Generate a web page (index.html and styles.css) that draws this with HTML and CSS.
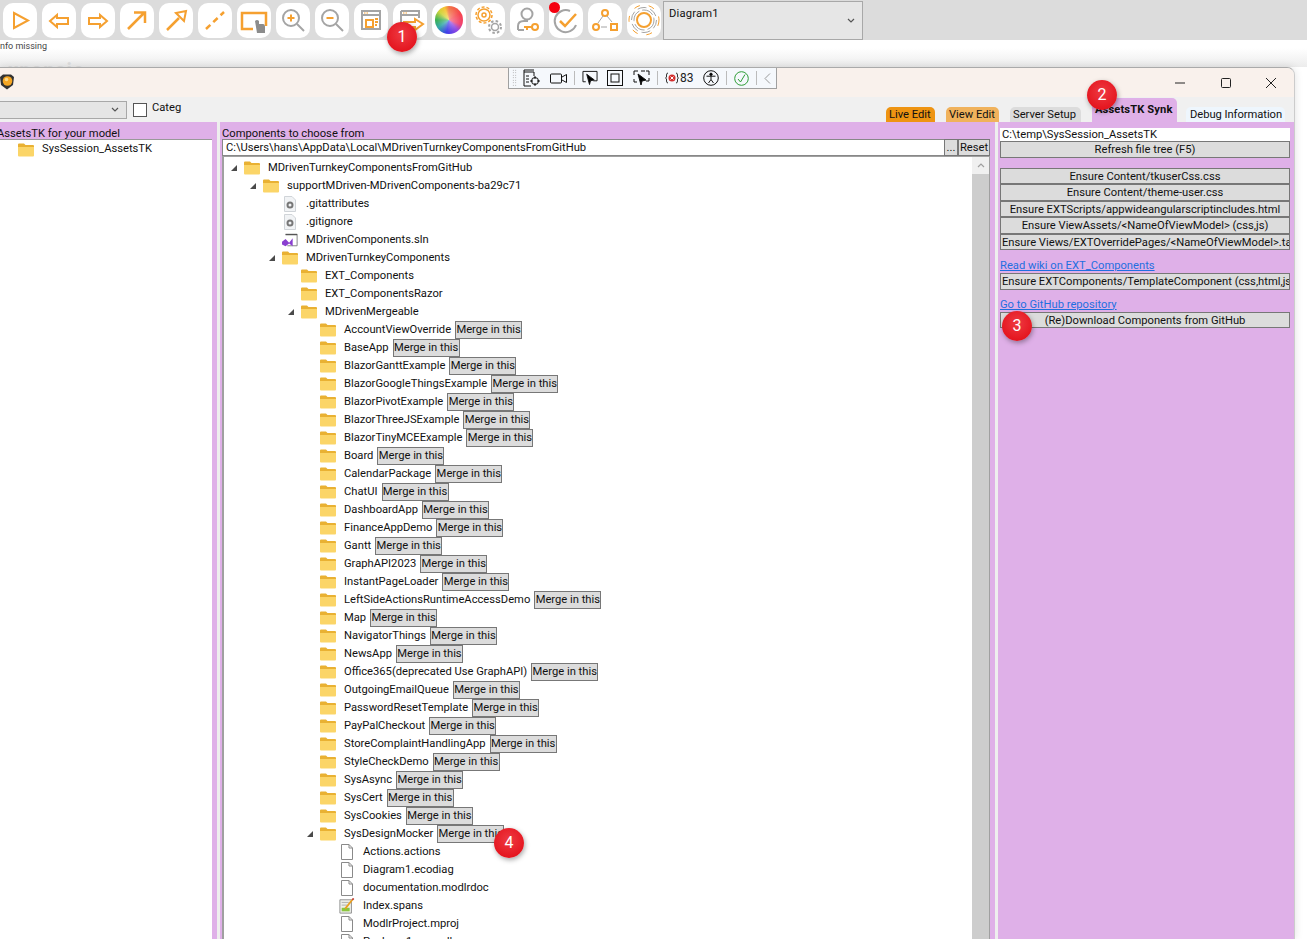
FILE: index.html
```html
<!DOCTYPE html>
<html lang="en">
<head>
<meta charset="UTF-8">
<title>AssetsTK Synk</title>
<link rel="stylesheet" href="styles.css">
</head>
<body>
<svg class="defs">
  <symbol id="folder" viewBox="0 0 16 14">
    <path d="M0 1.5 Q0 .5 1 .5 H6 L7.5 2 H15 Q16 2 16 3 V5 H0 Z" fill="#e9b133"/>
    <path d="M0 4 H16 V12.5 Q16 13.5 15 13.5 H1 Q0 13.5 0 12.5 Z" fill="#fbd568"/>
  </symbol>
  <symbol id="arrow" viewBox="0 0 8 8"><path d="M1 7 H7 V1 Z" fill="#4a4a4a"/></symbol>
  <symbol id="doc" viewBox="0 0 14 16">
    <path d="M1.5 .5 H9 L12.5 4 V15.5 H1.5 Z M9 .5 V4 H12.5" fill="#fff" stroke="#8a8a8a"/>
  </symbol>
  <symbol id="gearfile" viewBox="0 0 14 16">
    <path d="M1.5 .5 H9 L12.5 4 V15.5 H1.5 Z" fill="#f1f3f5" stroke="#d0d4d8"/>
    <circle cx="7" cy="9" r="2.5" fill="none" stroke="#777" stroke-width="2"/>
  </symbol>
  <symbol id="slnfile" viewBox="0 0 18 14">
    <path d="M4 .5 H17 V13.5 H6" fill="#fff" stroke="#777"/>
    <path d="M4 1 H17" stroke="#555" stroke-width="1.5"/>
    <path d="M0 9 L4 6 L8 10 L12 5 V14 L8 11 L4 14 L0 12 Z" fill="#8a3fd0"/>
  </symbol>
  <symbol id="notefile" viewBox="0 0 18 18">
    <path d="M1 2 H14 V17 H1 Z" fill="#eef0ea" stroke="#8a8a8a"/>
    <path d="M3 11 H12 V15 H3 Z" fill="#8cc63f"/>
    <path d="M3 5 H11 M3 8 H9" stroke="#aaa"/>
    <path d="M7 12 L15 2" stroke="#e8a020" stroke-width="2"/>
    <path d="M15 2 L16.5 .5" stroke="#c0392b" stroke-width="2"/>
  </symbol>
</svg>

<div class="toolbar">
  <span class="tool"><svg viewBox="0 0 34 34"><path d="M11 10 L25 17.5 L11 25 Z" class="o"/></svg></span>
  <span class="tool"><svg viewBox="0 0 34 34"><path d="M8 18 L15 12 V15 H26 V21 H15 V24 Z" class="o"/></svg></span>
  <span class="tool"><svg viewBox="0 0 34 34"><path d="M26 18 L19 12 V15 H8 V21 H19 V24 Z" class="o"/></svg></span>
  <span class="tool"><svg viewBox="0 0 34 34"><path d="M8 26 L24 10 M14 9.500 H25 V20" class="o thick"/></svg></span>
  <span class="tool"><svg viewBox="0 0 34 34"><path d="M8 27 L20 15" class="o thick"/><path d="M17 10 L27 8 L25 18 Z" class="o"/></svg></span>
  <span class="tool"><svg viewBox="0 0 34 34"><path d="M8 26 L26 9" class="o thick" stroke-dasharray="6 4"/></svg></span>
  <span class="tool"><svg viewBox="0 0 34 34"><path d="M16 26 H5 V10 H29 V23" class="o thick"/><path d="M18 18 Q20 16 22 18 V21 H26 Q28 21 28 24 V30 H20 Z" fill="#8c8c8c"/></svg></span>
  <span class="tool"><svg viewBox="0 0 34 34"><circle cx="15" cy="15" r="8" class="g"/><path d="M21 21 L28 28" class="g"/><path d="M11.500 15 H18.500 M15 11.500 V18.500" class="o"/></svg></span>
  <span class="tool"><svg viewBox="0 0 34 34"><circle cx="15" cy="15" r="8" class="g"/><path d="M21 21 L28 28" class="g"/><path d="M11.500 15 H18.500" class="o"/></svg></span>
  <span class="tool"><svg viewBox="0 0 34 34"><path d="M8 8 H26 V26 H8 Z M8 12 H26" class="g"/><path d="M10 10 H15" stroke="#f5a030" stroke-dasharray="1.500 1"/><path d="M12 17 H19 V24 H12 Z" class="o"/><path d="M21 16 H24 M21 19 H24 M21 22 H23" class="o"/></svg></span>
  <span class="tool"><svg viewBox="0 0 34 34"><path d="M8 8 H26 V15 M8 8 V26 H12 M8 12 H26" class="g"/><path d="M10 10 H15" stroke="#f5a030" stroke-dasharray="1.500 1"/><path d="M10 19 H22 V16 L30 21 L22 27 V24 H10" class="o"/></svg></span>
  <span class="tool"><span class="wheel"></span></span>
  <span class="tool"><svg viewBox="0 0 34 34"><circle cx="13" cy="12" r="6" class="o mid"/><circle cx="13" cy="12" r="8" class="o mid" stroke-dasharray="3 2"/><circle cx="13" cy="12" r="2" class="o mid"/><circle cx="24" cy="24" r="3.500" class="g mid"/><circle cx="24" cy="24" r="6" class="g" stroke-dasharray="2.500 2.200"/></svg></span>
  <span class="tool"><svg viewBox="0 0 34 34"><circle cx="17" cy="11" r="5.500" class="g"/><path d="M8 27 V23 Q8 18 14 18 H18" class="g"/><path d="M8 27 H14" class="g"/><circle cx="25" cy="24" r="3" class="o"/><path d="M22 24 H14 M17 24 V27" class="o"/></svg></span>
  <span class="tool"><svg viewBox="0 0 34 34"><path d="M27 22 A11 11 0 1 1 21 8" class="g"/><path d="M11 18 L16 23 L27 11" class="o thick"/></svg><span class="alert-dot"></span></span>
  <span class="tool"><svg viewBox="0 0 34 34"><circle cx="17" cy="10" r="3" class="o"/><circle cx="8" cy="24" r="3" class="o"/><path d="M23 21 H29 V27 H23 Z" class="o"/><path d="M15 13 L10 20 M19 13 L24 19 M13 24 H19" class="g thin"/></svg></span>
  <span class="tool"><svg viewBox="0 0 34 34"><circle cx="17" cy="17" r="7" class="o"/><circle cx="17" cy="17" r="10" class="g thin" stroke-dasharray="12 3"/><circle cx="17" cy="17" r="12.500" class="g thin" stroke-dasharray="9 4"/><circle cx="17" cy="17" r="15" class="o thin" stroke-dasharray="6 9"/></svg></span>
  <div class="diagram-select"><span>Diagram1</span><svg class="chev" viewBox="0 0 8 5"><path d="M1 1 L4 4 L7 1"/></svg></div>
</div>

<div class="strip">
  <div class="strip-info">nfo missing</div>
  <div class="strip-ghost">xpansio</div>
</div>

<div class="window">
  <div class="titlebar">
    <svg class="logo" viewBox="0 0 14 16"><path d="M0 3 L3 .5 H11 L14 3 L13 11 L7 15.500 L1 11 Z" fill="#333"/><circle cx="7.500" cy="7" r="4.800" fill="#f5a623"/><circle cx="6.500" cy="5.500" r="1.800" fill="#fbd98a"/></svg>
    <div class="winctl">
      <svg viewBox="0 0 12 12"><path d="M1 6 H11"/></svg>
      <svg viewBox="0 0 12 12"><rect x="1.500" y="1.500" width="9" height="9" rx="1"/></svg>
      <svg viewBox="0 0 12 12"><path d="M1 1 L11 11 M11 1 L1 11"/></svg>
    </div>
  </div>

  <div class="debugbar">
    <span class="grip"></span>
    <svg class="dbg w18" viewBox="0 0 18 18"><path d="M1 1 H11 M1 1 V17 H8 M1 3 H11 V7" /><path d="M3 7 H6 M3 10 H6 M3 13 H6"/><circle cx="12" cy="12" r="3.500"/><path d="M12 7 V10 M12 14 V17 M7 12 H10 M14 12 H17"/></svg>
    <svg class="dbg w17 gap9" viewBox="0 0 17 12"><rect x=".5" y="2" width="11" height="9" rx="1"/><path d="M12 5 L16.500 2.500 V10.500 L12 8"/></svg>
    <span class="dbg-sep"></span>
    <svg class="dbg w16" viewBox="0 0 17 16"><path d="M4 12 H1 V1 H16 V11 H12"/><path d="M5 4 L13 10 L9 11 L8 15 Z" fill="#000"/></svg>
    <svg class="dbg w16 gap9" viewBox="0 0 16 16"><rect x=".5" y=".5" width="15" height="15"/><rect x="4" y="4" width="8" height="8"/></svg>
    <svg class="dbg w17 gap10" viewBox="0 0 17 16"><path d="M4 12 H1 V9 M1 5 V1 H5 M8 1 H12 M13 1 H16 V5 M16 8 V11 H13" /><path d="M5 4 L13 10 L9 11 L8 15 Z" fill="#000"/></svg>
    <span class="dbg-sep"></span>
    <span class="errs"><svg viewBox="0 0 14 12"><path d="M3 1 Q1.500 1 1.500 3 V5 L.5 6 L1.500 7 V9 Q1.500 11 3 11 M11 1 Q12.500 1 12.500 3 V5 L13.500 6 L12.500 7 V9 Q12.500 11 11 11" fill="none" stroke="#333"/><circle cx="7" cy="6" r="3.500" fill="#d32f2f"/><path d="M5.500 4.500 L8.500 7.500 M8.500 4.500 L5.500 7.500" stroke="#fff"/></svg>83</span>
    <svg class="dbg w16 gap10" viewBox="0 0 16 16"><circle cx="8" cy="8" r="7.300"/><circle cx="8" cy="4.300" r="1.200" fill="#000"/><path d="M3.500 6.200 H12.500 M8 6.200 V9.500 M8 9.500 L5.500 13 M8 9.500 L10.500 13"/></svg>
    <span class="dbg-sep"></span>
    <svg class="dbg w15 ok" viewBox="0 0 15 15"><circle cx="7.500" cy="7.500" r="6.800"/><path d="M4 8 L6.500 11 L11 3.500"/></svg>
    <span class="dbg-sep"></span>
    <svg class="dbg w7 back" viewBox="0 0 7 11"><path d="M6 .5 L1 5.500 L6 10.500"/></svg>
  </div>

  <div class="tabrow">
    <div class="combo"><svg class="chev" viewBox="0 0 8 5"><path d="M1 1 L4 4 L7 1"/></svg></div>
    <span class="check"></span>
    <span class="categ">Categ</span>
    <div class="tabs">
      <span class="tab tab-live">Live Edit</span>
      <span class="tab tab-view">View Edit</span>
      <span class="tab tab-server">Server Setup</span>
      <span class="tab tab-assets">AssetsTK Synk</span>
      <span class="tab tab-debug">Debug Information</span>
    </div>
  </div>

  <div class="content">
    <div class="pane-left">
      <div class="pane-label clip-left">AssetsTK for your model</div>
      <div class="model-list">
        <div class="model-item"><svg class="ico-folder"><use href="#folder"/></svg>SysSession_AssetsTK</div>
      </div>
    </div>
    <div class="splitter"></div>
    <div class="pane-mid">
      <div class="pane-label">Components to choose from</div>
      <div class="path-row">
        <div class="path-input">C:\Users\hans\AppData\Local\MDrivenTurnkeyComponentsFromGitHub</div>
        <button class="btn btn-dots">...</button>
        <button class="btn btn-reset">Reset</button>
      </div>
      <div class="tree-box">
        <div class="tree">
          <div class="row l0"><svg class="tw"><use href="#arrow"/></svg><svg class="ico"><use href="#folder"/></svg><span>MDrivenTurnkeyComponentsFromGitHub</span></div>
          <div class="row l1"><svg class="tw"><use href="#arrow"/></svg><svg class="ico"><use href="#folder"/></svg><span>supportMDriven-MDrivenComponents-ba29c71</span></div>
          <div class="row l2"><i class="tw"></i><svg class="ico"><use href="#gearfile"/></svg><span>.gitattributes</span></div>
          <div class="row l2"><i class="tw"></i><svg class="ico"><use href="#gearfile"/></svg><span>.gitignore</span></div>
          <div class="row l2"><i class="tw"></i><svg class="ico"><use href="#slnfile"/></svg><span>MDrivenComponents.sln</span></div>
          <div class="row l2"><svg class="tw"><use href="#arrow"/></svg><svg class="ico"><use href="#folder"/></svg><span>MDrivenTurnkeyComponents</span></div>
          <div class="row l3"><i class="tw"></i><svg class="ico"><use href="#folder"/></svg><span>EXT_Components</span></div>
          <div class="row l3"><i class="tw"></i><svg class="ico"><use href="#folder"/></svg><span>EXT_ComponentsRazor</span></div>
          <div class="row l3"><svg class="tw"><use href="#arrow"/></svg><svg class="ico"><use href="#folder"/></svg><span>MDrivenMergeable</span></div>
          <div class="row l4"><i class="tw"></i><svg class="ico"><use href="#folder"/></svg><span>AccountViewOverride</span><button class="btn merge">Merge in this</button></div>
          <div class="row l4"><i class="tw"></i><svg class="ico"><use href="#folder"/></svg><span>BaseApp</span><button class="btn merge">Merge in this</button></div>
          <div class="row l4"><i class="tw"></i><svg class="ico"><use href="#folder"/></svg><span>BlazorGanttExample</span><button class="btn merge">Merge in this</button></div>
          <div class="row l4"><i class="tw"></i><svg class="ico"><use href="#folder"/></svg><span>BlazorGoogleThingsExample</span><button class="btn merge">Merge in this</button></div>
          <div class="row l4"><i class="tw"></i><svg class="ico"><use href="#folder"/></svg><span>BlazorPivotExample</span><button class="btn merge">Merge in this</button></div>
          <div class="row l4"><i class="tw"></i><svg class="ico"><use href="#folder"/></svg><span>BlazorThreeJSExample</span><button class="btn merge">Merge in this</button></div>
          <div class="row l4"><i class="tw"></i><svg class="ico"><use href="#folder"/></svg><span>BlazorTinyMCEExample</span><button class="btn merge">Merge in this</button></div>
          <div class="row l4"><i class="tw"></i><svg class="ico"><use href="#folder"/></svg><span>Board</span><button class="btn merge">Merge in this</button></div>
          <div class="row l4"><i class="tw"></i><svg class="ico"><use href="#folder"/></svg><span>CalendarPackage</span><button class="btn merge">Merge in this</button></div>
          <div class="row l4"><i class="tw"></i><svg class="ico"><use href="#folder"/></svg><span>ChatUI</span><button class="btn merge">Merge in this</button></div>
          <div class="row l4"><i class="tw"></i><svg class="ico"><use href="#folder"/></svg><span>DashboardApp</span><button class="btn merge">Merge in this</button></div>
          <div class="row l4"><i class="tw"></i><svg class="ico"><use href="#folder"/></svg><span>FinanceAppDemo</span><button class="btn merge">Merge in this</button></div>
          <div class="row l4"><i class="tw"></i><svg class="ico"><use href="#folder"/></svg><span>Gantt</span><button class="btn merge">Merge in this</button></div>
          <div class="row l4"><i class="tw"></i><svg class="ico"><use href="#folder"/></svg><span>GraphAPI2023</span><button class="btn merge">Merge in this</button></div>
          <div class="row l4"><i class="tw"></i><svg class="ico"><use href="#folder"/></svg><span>InstantPageLoader</span><button class="btn merge">Merge in this</button></div>
          <div class="row l4"><i class="tw"></i><svg class="ico"><use href="#folder"/></svg><span>LeftSideActionsRuntimeAccessDemo</span><button class="btn merge">Merge in this</button></div>
          <div class="row l4"><i class="tw"></i><svg class="ico"><use href="#folder"/></svg><span>Map</span><button class="btn merge">Merge in this</button></div>
          <div class="row l4"><i class="tw"></i><svg class="ico"><use href="#folder"/></svg><span>NavigatorThings</span><button class="btn merge">Merge in this</button></div>
          <div class="row l4"><i class="tw"></i><svg class="ico"><use href="#folder"/></svg><span>NewsApp</span><button class="btn merge">Merge in this</button></div>
          <div class="row l4"><i class="tw"></i><svg class="ico"><use href="#folder"/></svg><span>Office365(deprecated Use GraphAPI)</span><button class="btn merge">Merge in this</button></div>
          <div class="row l4"><i class="tw"></i><svg class="ico"><use href="#folder"/></svg><span>OutgoingEmailQueue</span><button class="btn merge">Merge in this</button></div>
          <div class="row l4"><i class="tw"></i><svg class="ico"><use href="#folder"/></svg><span>PasswordResetTemplate</span><button class="btn merge">Merge in this</button></div>
          <div class="row l4"><i class="tw"></i><svg class="ico"><use href="#folder"/></svg><span>PayPalCheckout</span><button class="btn merge">Merge in this</button></div>
          <div class="row l4"><i class="tw"></i><svg class="ico"><use href="#folder"/></svg><span>StoreComplaintHandlingApp</span><button class="btn merge">Merge in this</button></div>
          <div class="row l4"><i class="tw"></i><svg class="ico"><use href="#folder"/></svg><span>StyleCheckDemo</span><button class="btn merge">Merge in this</button></div>
          <div class="row l4"><i class="tw"></i><svg class="ico"><use href="#folder"/></svg><span>SysAsync</span><button class="btn merge">Merge in this</button></div>
          <div class="row l4"><i class="tw"></i><svg class="ico"><use href="#folder"/></svg><span>SysCert</span><button class="btn merge">Merge in this</button></div>
          <div class="row l4"><i class="tw"></i><svg class="ico"><use href="#folder"/></svg><span>SysCookies</span><button class="btn merge">Merge in this</button></div>
          <div class="row l4"><svg class="tw"><use href="#arrow"/></svg><svg class="ico"><use href="#folder"/></svg><span>SysDesignMocker</span><button class="btn merge">Merge in this</button></div>
          <div class="row l5"><i class="tw"></i><svg class="ico"><use href="#doc"/></svg><span>Actions.actions</span></div>
          <div class="row l5"><i class="tw"></i><svg class="ico"><use href="#doc"/></svg><span>Diagram1.ecodiag</span></div>
          <div class="row l5"><i class="tw"></i><svg class="ico"><use href="#doc"/></svg><span>documentation.modlrdoc</span></div>
          <div class="row l5"><i class="tw"></i><svg class="ico"><use href="#notefile"/></svg><span>Index.spans</span></div>
          <div class="row l5"><i class="tw"></i><svg class="ico"><use href="#doc"/></svg><span>ModlrProject.mproj</span></div>
          <div class="row l5"><i class="tw"></i><svg class="ico"><use href="#doc"/></svg><span>Package1.ecomdl</span></div>
        </div>
        <div class="scrollbar">
          <div class="scroll-up"><svg class="chev" viewBox="0 0 8 5"><path d="M1 4 L4 1 L7 4"/></svg></div>
          <div class="scroll-thumb"></div>
        </div>
      </div>
    </div>
    <div class="splitter"></div>
    <div class="pane-right">
      <div class="path-field">C:\temp\SysSession_AssetsTK</div>
      <button class="btn wide">Refresh file tree (F5)</button>
      <div class="group">
        <button class="btn wide">Ensure Content/tkuserCss.css</button>
        <button class="btn wide">Ensure Content/theme-user.css</button>
        <button class="btn wide">Ensure EXTScripts/appwideangularscriptincludes.html</button>
        <button class="btn wide">Ensure ViewAssets/&lt;NameOfViewModel&gt; (css,js)</button>
        <button class="btn wide clip">Ensure Views/EXTOverridePages/&lt;NameOfViewModel&gt;.tag</button>
      </div>
      <a class="link link-wiki" href="#">Read wiki on EXT_Components</a>
      <button class="btn wide clip">Ensure EXTComponents/TemplateComponent (css,html,js)</button>
      <a class="link link-git" href="#">Go to GitHub repository</a>
      <button class="btn wide">(Re)Download Components from GitHub</button>
    </div>
  </div>
</div>

<span class="marker m1">1</span>
<span class="marker m2">2</span>
<span class="marker m3">3</span>
<span class="marker m4">4</span>
</body>
</html>
```

FILE: styles.css
```css
* {
    box-sizing: border-box;
}

html, body {
    height: 100%;
}

body {
    margin: 0;
    display: flex;
    flex-direction: column;
    overflow: hidden;
    background-color: #fff;
    color: #111;
    font-family: Roboto, "Liberation Sans", sans-serif;
    font-size: 11.2px;
    line-height: 14px;
}

.defs {
    position: absolute;
    width: 0;
    height: 0;
}

/* top toolbar */
.toolbar {
    height: 40px;
    flex: none;
    display: flex;
    gap: 5px;
    padding: 3px 0 0 3px;
    background-color: #dcdcdc;
}

.tool {
    position: relative;
    width: 34px;
    height: 35px;
    flex: none;
    border-radius: 10px;
    background-color: #fff;
}

.tool svg {
    display: block;
    width: 34px;
    height: 34px;
}

.tool .o, .tool .g {
    fill: none;
    stroke-width: 2;
}

.tool .o {
    stroke: #f5a030;
}

.tool .g {
    stroke: #a4a4a4;
}

.tool .thick {
    stroke-width: 2.5;
}

.tool .mid {
    stroke-width: 1.5;
}

.tool .thin {
    stroke-width: 1;
}

.wheel {
    display: block;
    width: 28px;
    height: 28px;
    margin: 3px;
    border-radius: 50%;
    background: radial-gradient(circle, rgba(255,255,255,0.45) 0, rgba(255,255,255,0.1) 60%, rgba(255,255,255,0) 100%),
        conic-gradient(#f06a35 0deg, #f5343c 60deg, #f03060 110deg, #8a38e0 140deg, #2c28e8 190deg, #1fa0a0 235deg, #27a845 270deg, #c8d028 310deg, #f5c020 340deg, #f06a35 360deg);
}

.alert-dot {
    position: absolute;
    left: 0;
    top: -1px;
    width: 11px;
    height: 11px;
    border-radius: 50%;
    background-color: #f5000f;
}

.diagram-select {
    width: 200px;
    height: 39px;
    margin: -2px 0 0 -3px;
    padding: 5px 7px 5px 5px;
    display: flex;
    justify-content: space-between;
    border: 1px solid #a8a8a8;
    background-color: #e6e6e6;
}

.diagram-select span {
    letter-spacing: 0.2px;
}

.chev {
    width: 8px;
    height: 5px;
    fill: none;
    stroke: #555;
    stroke-width: 1.2;
}

.diagram-select .chev {
    margin-top: 11px;
}

/* strip under the toolbar */
.strip {
    height: 27px;
    flex: none;
    overflow: hidden;
    background: linear-gradient(#fff 30%, #ececec);
}

.strip-info {
    margin-top: 1px;
    font-size: 9px;
    line-height: 11px;
    color: #444;
}

.strip-ghost {
    margin: 6px 0 0 8px;
    font-size: 20px;
    font-weight: bold;
    line-height: 24px;
    color: #dedede;
    letter-spacing: 1px;
}

/* app window */
.window {
    position: relative;
    flex: 1;
    min-height: 0;
    width: 1295px;
    display: flex;
    flex-direction: column;
    border-top: 1px solid #aaa;
    border-right: 1px solid #ccc;
    border-top-right-radius: 8px;
    box-shadow: 0 0 8px rgba(0,0,0,0.12);
    background-color: #f0f0f0;
    overflow: hidden;
}

.titlebar {
    height: 29px;
    flex: none;
    display: flex;
    align-items: center;
    justify-content: space-between;
    background-color: #f9f1ec;
}

.logo {
    width: 14px;
    height: 16px;
    margin-top: -2px;
}

.winctl {
    display: flex;
    gap: 33.5px;
    margin-right: 17px;
}

.winctl svg {
    width: 12px;
    height: 12px;
    fill: none;
    stroke: #222;
    stroke-width: 1;
}

/* floating debug bar */
.debugbar {
    position: absolute;
    left: 508px;
    top: -1px;
    width: 269px;
    height: 22px;
    display: flex;
    align-items: center;
    padding-left: 3px;
    border: 1px solid #a0a0a0;
    background-color: #f5f8fc;
}

.grip {
    width: 5px;
    height: 18px;
    margin-right: 6px;
    background-image: radial-gradient(#999 0.6px, transparent 0.7px);
    background-size: 2.5px 2.5px;
}

.dbg {
    flex: none;
    fill: none;
    stroke: #111;
    stroke-width: 1;
}

.w18 { width: 18px; height: 18px; }
.w17 { width: 17px; height: 16px; }
.w16 { width: 16px; height: 16px; }
.w15 { width: 15px; height: 15px; }
.w7 { width: 7px; height: 11px; }

.gap9 {
    margin-left: 9px;
}

.gap10 {
    margin-left: 10px;
}

.dbg-sep {
    width: 1px;
    height: 14px;
    margin: 0 7px;
    background-color: #bbb;
}

.ok {
    stroke: #2d9c35;
}

.back {
    stroke: #999;
}

.errs {
    display: flex;
    align-items: center;
    gap: 1px;
    width: 28px;
    font-size: 12px;
    color: #222;
    white-space: nowrap;
}

.errs svg {
    width: 14px;
    height: 12px;
    flex: none;
}

/* tab row */
.tabrow {
    height: 25px;
    flex: none;
    display: flex;
    align-items: flex-start;
}

.combo {
    width: 127px;
    height: 18px;
    margin-top: 4px;
    padding: 5px 7px 0 0;
    display: flex;
    justify-content: flex-end;
    border: 1px solid #a8a8a8;
    border-left: none;
    background-color: #e5e5e5;
}

.check {
    width: 14px;
    height: 14px;
    margin: 6px 0 0 6px;
    border: 1px solid #555;
    background-color: #fff;
}

.categ {
    margin: 4px 0 0 5px;
}

.tabs {
    margin-left: auto;
    height: 25px;
    display: flex;
    align-items: flex-end;
    padding-right: 9px;
}

.tab {
    height: 15px;
    padding: 1px 3px 0;
    border-radius: 5px 5px 0 0;
    white-space: nowrap;
}

.tab-live {
    width: 49px;
    background-color: #ee9412;
}

.tab-view {
    width: 53px;
    margin-left: 11px;
    background-color: #f0b25c;
}

.tab-server {
    width: 71px;
    margin-left: 11px;
    background-color: #dcdcdc;
}

.tab-assets {
    width: 85px;
    height: 24px;
    margin-left: 11px;
    padding: 5px 0 0 3px;
    font-weight: bold;
    letter-spacing: 0.1px;
    background-color: #dfb0e8;
}

.tab-debug {
    width: 99px;
    margin-left: 9px;
    padding-left: 4px;
    letter-spacing: -0.05px;
    background-color: #eef6fd;
}

/* purple work area */
.content {
    flex: 1;
    min-height: 0;
    display: flex;
    background-color: #dfb0e8;
}

.splitter {
    width: 3px;
    flex: none;
    background-color: #eeeeee;
}

.pane-left {
    width: 217px;
    flex: none;
    display: flex;
    flex-direction: column;
    padding-top: 5px;
}

.pane-label {
    height: 12px;
    line-height: 14px;
    white-space: nowrap;
}

.clip-left {
    margin-left: -3px;
}

.model-list {
    flex: 1;
    width: 212px;
    border-top: 1px solid #999;
    background-color: #fff;
}

.model-item {
    display: flex;
    align-items: center;
    height: 17px;
    padding-left: 18px;
}

.ico-folder {
    width: 16px;
    height: 14px;
    margin: 3px 8px 0 0;
}

.pane-mid {
    flex: 1;
    min-width: 0;
    display: flex;
    flex-direction: column;
    padding: 5px 5px 0 2px;
}

.path-row {
    height: 17px;
    flex: none;
    display: flex;
}

.path-input {
    flex: 1;
    padding-left: 3px;
    line-height: 15px;
    background-color: #fff;
    border: 1px solid #888;
    border-width: 1px 0 1px 1px;
    white-space: nowrap;
    overflow: hidden;
}

.btn {
    display: block;
    padding: 0;
    border: 1px solid #777;
    background-color: #dcdcdc;
    color: #111;
    font: inherit;
    white-space: nowrap;
    overflow: hidden;
}

.btn-dots {
    width: 14px;
}

.btn-reset {
    width: 32px;
}

.tree-box {
    flex: 1;
    min-height: 0;
    display: flex;
    border: 2px solid #a0a0a0;
    border-width: 1px 1px 0 2px;
    background-color: #fff;
}

.tree {
    flex: 1;
    min-width: 0;
    padding-top: 2px;
    overflow: hidden;
}

.row {
    height: 18px;
    display: flex;
    align-items: center;
    white-space: nowrap;
}

.l0 { padding-left: 2px; }
.l1 { padding-left: 21px; }
.l2 { padding-left: 40px; }
.l3 { padding-left: 59px; }
.l4 { padding-left: 78px; }
.l5 { padding-left: 97px; }

.tw {
    width: 8px;
    height: 8px;
    flex: none;
    margin: 0 4px;
}

.ico {
    width: 16px;
    height: 16px;
    flex: none;
    margin: 0 8px 0 2px;
}

.merge {
    width: 67px;
    height: 18px;
    margin-left: 4px;
}

.scrollbar {
    width: 17px;
    flex: none;
    display: flex;
    flex-direction: column;
    background-color: #f0f0f0;
}

.scroll-up {
    height: 17px;
    flex: none;
    display: flex;
    align-items: center;
    justify-content: center;
}

.scroll-up .chev {
    stroke: #a0a0a0;
}

.scroll-thumb {
    flex: 1;
    background-color: #cdcdcd;
}

.pane-right {
    flex: none;
    width: 296px;
    display: flex;
    flex-direction: column;
    padding: 6px 4px 0 2px;
}

.path-field {
    height: 13px;
    padding-left: 2px;
    line-height: 13px;
    background-color: #fff;
}

.wide {
    width: 100%;
    height: 16.5px;
    flex: none;
    padding-top: 1px;
    line-height: 14px;
}

.group {
    margin-top: 10px;
    display: flex;
    flex-direction: column;
}

.clip {
    text-align: left;
    padding-left: 1px;
}

.link {
    color: #1f6fe0;
    line-height: 14px;
}

.link-wiki {
    margin-top: 9px;
}

.link-git {
    margin-top: 8px;
}

/* numbered red callouts */
.marker {
    position: absolute;
    width: 30px;
    height: 30px;
    border-radius: 50%;
    display: flex;
    align-items: center;
    justify-content: center;
    background: radial-gradient(circle at 50% 40%, #ee3a42, #e4141e 75%);
    box-shadow: 1px 2px 5px rgba(0,0,0,0.35);
    color: #fff;
    font-size: 16px;
}

.m1 { left: 387px; top: 22px; }
.m2 { left: 1087px; top: 80px; }
.m3 { left: 1002px; top: 311px; }
.m4 { left: 494px; top: 828px; }
```
